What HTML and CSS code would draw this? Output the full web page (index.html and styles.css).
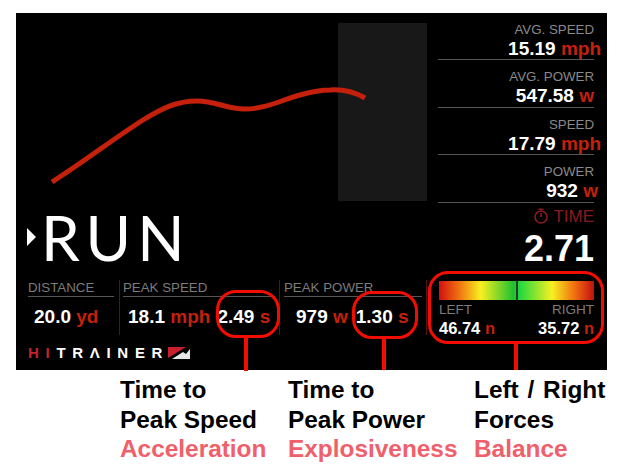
FILE: index.html
```html
<!DOCTYPE html>
<html lang="en">
<head>
  <meta charset="UTF-8" />
  <meta name="viewport" content="width=device-width, initial-scale=1" />
  <title>Hitrainer run results</title>
  <link rel="stylesheet" href="styles.css">
</head>
<body>
  <div class="panel">
    <div class="top">
      <div class="left">
        <svg class="graph" viewBox="0 0 422 198" width="422" height="198">
          <rect x="322" y="10" width="89" height="178" fill="#181818" />
          <path d="M36 169 C66 150 100 124 127 107 C145 96 160 88 181 88 C200 88 210 96 229 96 C250 96 265 87 284 82 C295 79 305 77 314 77 C328 76 340 80 349 85" fill="none" stroke="#c4200c" stroke-width="5" />
        </svg>
        <div class="mode">
          <span class="arrow"></span>
          <span class="mode-name">RUN</span>
        </div>
      </div>
      <div class="stats">
        <div class="stat">
          <div class="stat-label">AVG. SPEED</div>
          <div class="stat-value over">15.19 <b>mph</b></div>
        </div>
        <div class="stat">
          <div class="stat-label">AVG. POWER</div>
          <div class="stat-value">547.58 <b>w</b></div>
        </div>
        <div class="stat">
          <div class="stat-label">SPEED</div>
          <div class="stat-value over">17.79 <b>mph</b></div>
        </div>
        <div class="stat">
          <div class="stat-label">POWER</div>
          <div class="stat-value over-small">932 <b>w</b></div>
        </div>
        <div class="time-label">
          <svg viewBox="0 0 16 16" width="16" height="16">
            <circle cx="8" cy="9" r="6" fill="none" stroke="#8a1a20" stroke-width="1.6" />
            <path d="M8 9V5M5.5 1.2H10.500" fill="none" stroke="#8a1a20" stroke-width="1.6" />
          </svg>
          <span>TIME</span>
        </div>
        <div class="time-value">2.71</div>
      </div>
    </div>

    <div class="bottom">
      <div class="cell cell-distance">
        <div class="cell-label">DISTANCE</div>
        <div class="cell-value"><span class="pair">20.0 <b>yd</b></span></div>
      </div>
      <div class="cell cell-speed">
        <div class="cell-label">PEAK SPEED</div>
        <div class="cell-value">
          <span class="pair">18.1 <b>mph</b></span>
          <span class="pair">2.49 <b>s</b></span>
        </div>
      </div>
      <div class="cell cell-power">
        <div class="cell-label">PEAK POWER</div>
        <div class="cell-value">
          <span class="pair">979 <b>w</b></span>
          <span class="pair">1.30 <b>s</b></span>
        </div>
      </div>
      <div class="cell-balance">
        <div class="bar"></div>
        <div class="sides">
          <div>
            <div class="side-label">LEFT</div>
            <div class="side-value">46.74 <b>n</b></div>
          </div>
          <div class="side-right">
            <div class="side-label">RIGHT</div>
            <div class="side-value">35.72 <b>n</b></div>
          </div>
        </div>
      </div>
    </div>

    <div class="logo" aria-label="Hitrainer">
      <span class="logo-hi">HI</span><span>TRΛINER</span>
      <svg viewBox="0 0 22 12" width="22" height="12">
        <path d="M0 0H18L0 11Z" fill="#c8202c" />
        <path d="M22 2V12H4L15 5L18 7Z" fill="#e8e8e8" />
      </svg>
    </div>

    <!-- red callouts drawn over the screenshot -->
    <div class="ring ring-speed"></div>
    <div class="ring ring-power"></div>
    <div class="ring ring-balance"></div>
  </div>

  <div class="captions">
    <div class="caption caption-speed">Time to<br>Peak Speed<br><em>Acceleration</em></div>
    <div class="caption caption-power">Time to<br>Peak Power<br><em>Explosiveness</em></div>
    <div class="caption caption-forces">Left / Right<br>Forces<br><em>Balance</em></div>
  </div>
</body>
</html>
```

FILE: styles.css
```css
* {
  box-sizing: border-box;
}
html, body {
  height: 100%;
  overflow: hidden;
}
body {
  margin: 0;
  padding-top: 13px;
  background: #fff;
  font-family: "Liberation Sans", Arial, sans-serif;
}
.panel {
  position: relative;
  margin-left: 16px;
  width: 591px;
  height: 357px;
  background: #000;
  color: #fff;
}
.top {
  display: flex;
  height: 262px;
}
.left {
  width: 422px;
  flex: none;
}
.graph {
  display: block;
}
.mode {
  display: flex;
  align-items: center;
  padding-left: 11px;
  height: 52px;
}
.arrow {
  width: 0;
  height: 0;
  border-left: 9px solid #fff;
  border-top: 9px solid transparent;
  border-bottom: 9px solid transparent;
}
.mode-name {
  margin-left: 5px;
  font-family: Lato, sans-serif;
  font-weight: 400;
  font-size: 62px;
  line-height: 52px;
  letter-spacing: 6px;
}

.stats {
  width: 156px;
  text-align: right;
}
.stat {
  height: 47.4px;
  padding-top: 9px;
  border-bottom: 1px solid #555;
}
.stat-label {
  font-size: 13.3px;
  line-height: 15px;
  color: #8a8a8a;
}
.stat-value {
  margin-top: 1px;
  font-size: 19px;
  font-weight: bold;
  line-height: 21px;
}
.stat-value b, .cell-value b, .side-value b {
  color: #c4200c;
}
.over {
  margin-right: -7px;
}
.over-small {
  margin-right: -4px;
}
.time-label {
  display: flex;
  justify-content: flex-end;
  align-items: center;
  gap: 4px;
  margin-top: 5px;
  font-size: 17px;
  line-height: 17px;
  color: #8a1a20;
}
.time-value {
  margin-top: 5px;
  font-size: 36px;
  line-height: 38px;
  font-weight: bold;
}

.bottom {
  display: flex;
  height: 62px;
}
.cell {
  height: 55px;
  margin-top: 5px;
  flex: none;
}
.cell-label {
  font-size: 13.3px;
  line-height: 15px;
  padding-bottom: 1px;
  color: #7c7c7c;
  border-bottom: 1px solid #555;
}
.cell-value {
  display: flex;
  font-size: 19px;
  font-weight: bold;
  line-height: 21px;
  margin-top: 9px;
}
.cell-distance {
  width: 91px;
  margin-left: 12px;
  padding-right: 5px;
}
.cell-distance .cell-value {
  padding-left: 6px;
}
.cell-speed {
  width: 160px;
  border-left: 1px solid #5a1216;
  padding-left: 3px;
  padding-right: 4px;
}
.cell-speed .cell-value {
  padding-left: 5px;
  gap: 7px;
}
.cell-power {
  width: 147px;
  border-left: 1px solid #5a1216;
  padding-left: 4px;
  padding-right: 4px;
}
.cell-power .cell-value {
  padding-left: 12px;
  gap: 8px;
}
.cell-balance {
  width: 169px;
  height: 55px;
  margin-top: 5px;
  flex: none;
  border-left: 1px solid #5a1216;
  padding-left: 12px;
  padding-top: 1px;
}
.bar {
  position: relative;
  width: 155px;
  height: 19px;
  background: linear-gradient(to right, #d01010 0%, #f06a10 12%, #f8f020 27%, #20c030 48%, #20d840 52%, #f8f020 73%, #f06a10 88%, #c01010 100%);
}
.bar::after {
  content: "";
  position: absolute;
  left: 77px;
  top: 0;
  bottom: 0;
  width: 2px;
  background: #2a3a2a;
}
.sides {
  display: flex;
  justify-content: space-between;
  width: 155px;
  margin-top: 3px;
}
.side-right {
  text-align: right;
}
.side-label {
  font-size: 13.5px;
  line-height: 14px;
  color: #7c7c7c;
}
.side-value {
  margin-top: 2px;
  font-size: 16.5px;
  font-weight: bold;
  line-height: 18px;
}

.logo {
  display: flex;
  align-items: center;
  margin-top: 9px;
  margin-left: 12px;
  font-size: 15px;
  font-weight: bold;
  line-height: 14px;
  letter-spacing: 6.7px;
  white-space: nowrap;
}
.logo-hi {
  color: #c8202c;
}
.logo svg {
  margin-left: -1px;
}

.ring {
  position: absolute;
  border: 3px solid #f30d00;
  border-radius: 20px;
}
.ring::after {
  content: "";
  position: absolute;
  top: 100%;
  width: 4px;
  background: #f30d00;
}
.ring-speed {
  left: 200px;
  top: 277px;
  width: 64px;
  height: 48px;
}
.ring-speed::after {
  left: 25px;
  height: 36px;
}
.ring-power {
  left: 336px;
  top: 278px;
  width: 66px;
  height: 48px;
}
.ring-power::after {
  left: 27px;
  height: 34px;
}
.ring-balance {
  left: 412px;
  top: 258px;
  width: 176px;
  height: 73px;
}
.ring-balance::after {
  left: 83px;
  height: 29px;
}

.captions {
  display: flex;
  padding-left: 120px;
  font-size: 24.4px;
  font-weight: bold;
  line-height: 29.5px;
  color: #000;
  margin-top: 5px;
}
.caption {
  white-space: nowrap;
}
.caption-speed {
  width: 168px;
}
.caption-power {
  width: 186px;
}
.caption-forces {
  word-spacing: 2px;
}
.caption em {
  font-style: normal;
  color: #f0606a;
}
```
